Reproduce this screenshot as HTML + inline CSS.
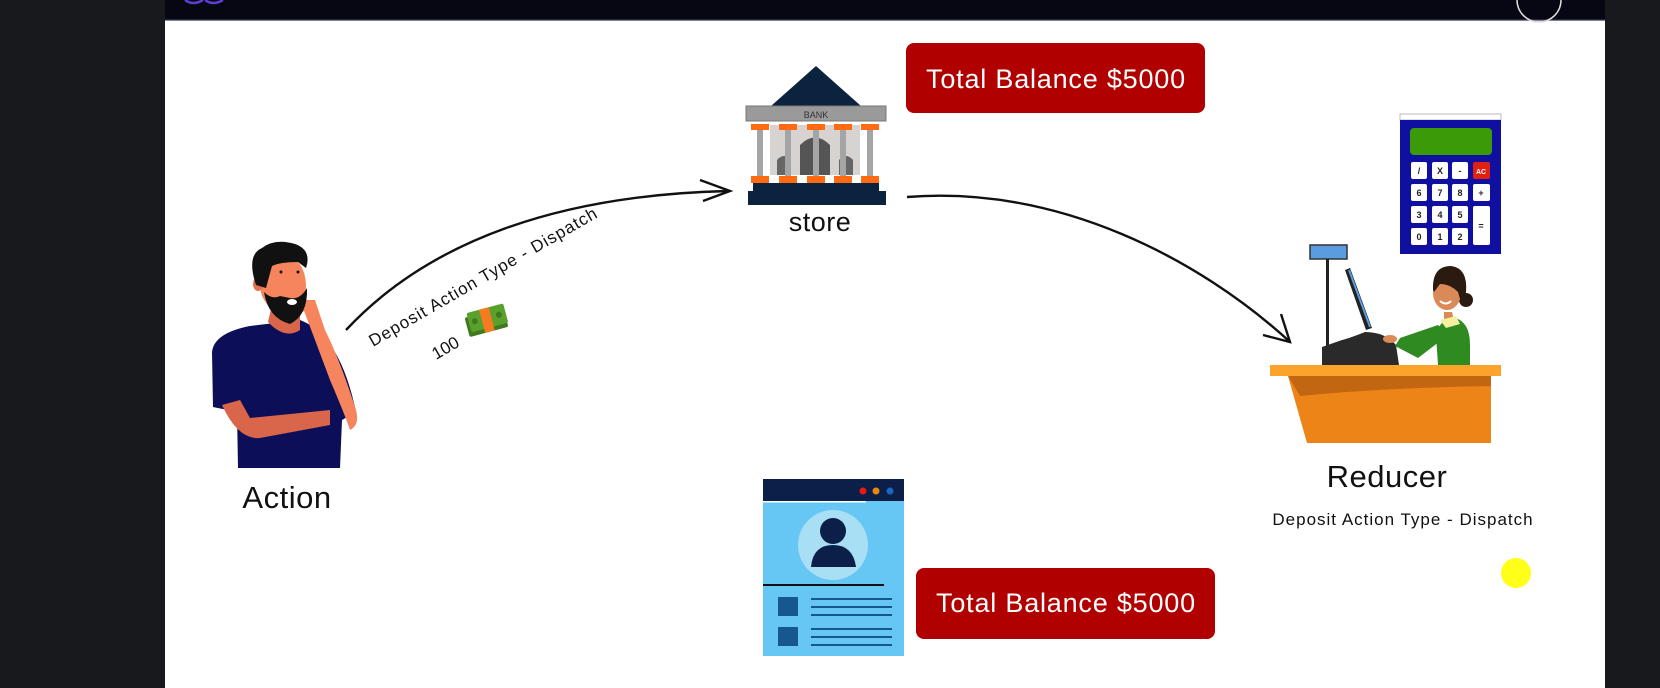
<!DOCTYPE html>
<html><head><meta charset="utf-8"><style>
html,body{margin:0;padding:0;width:1660px;height:688px;overflow:hidden;background:#18191d}
svg{display:block}
text{font-family:"Liberation Sans",sans-serif}
</style></head><body>
<svg width="1660" height="688" viewBox="0 0 1660 688" xmlns="http://www.w3.org/2000/svg">
<rect x="0" y="0" width="1660" height="688" fill="#18191d"/>
<rect x="165" y="0" width="1440" height="688" fill="#ffffff"/>
<rect x="165" y="0" width="1440" height="20" fill="#060712"/>
<rect x="165" y="19.5" width="1440" height="1.2" fill="#4a4766"/>
<path d="M185 0 q8 6 18 0 M205 0 q8 6 18 0" stroke="#5b3fd0" stroke-width="2.5" fill="none"/>
<path d="M1517 0 a22 22 0 0 0 44 0" stroke="#ddd" stroke-width="1.5" fill="none"/>

<!-- arrows -->
<path d="M346 330 C430 240 560 195 728 191" stroke="#111" stroke-width="2.4" fill="none"/>
<path d="M700 180 L730 191 L703 201" stroke="#111" stroke-width="2.4" fill="none"/>
<path d="M907 197 C1060 185 1200 260 1289 341" stroke="#111" stroke-width="2.4" fill="none"/>
<path d="M1263 335 L1290 342 L1281 314" stroke="#111" stroke-width="2.4" fill="none"/>

<!-- rotated label -->
<text transform="translate(373,347) rotate(-30)" font-size="17" fill="#111" letter-spacing="1">Deposit Action Type - Dispatch</text>
<text transform="translate(436,360) rotate(-30)" font-size="17" fill="#111">100</text>
<g transform="translate(463,312) rotate(-15)">
<rect x="0" y="6" width="40" height="20" rx="2" fill="#3f7a1f"/>
<rect x="3" y="2" width="38" height="20" rx="2" fill="#5aa02c"/>
<rect x="16" y="2" width="10" height="24" fill="#f47b20"/>
<circle cx="9" cy="12" r="3" fill="#3f7a1f"/><circle cx="34" cy="12" r="3" fill="#3f7a1f"/>
</g>

<!-- man -->
<g>
<path d="M238 468 L237 412 L213 407 L212 352 Q214 333 250 326 L300 320 Q340 335 356 412 L342 420 L340 468 Z" fill="#0c0f58"/>
<path d="M222 405 Q238 440 260 438 L330 425 L330 410 L250 418 L240 400 Z" fill="#d9654a"/>
<path d="M300 300 Q315 340 330 380 Q345 415 350 430 Q360 425 356 410 Q340 360 325 330 L315 300 Z" fill="#f6845c"/>
<path d="M268 322 Q285 340 300 330 L300 310 L272 305 Z" fill="#d9654a"/>
<path d="M262 270 Q265 252 285 254 Q305 260 306 285 L305 310 Q290 325 275 312 Q260 300 260 285 Z" fill="#f6845c"/>
<ellipse cx="258" cy="284" rx="5" ry="7" fill="#e5704e"/>
<path d="M264 292 Q268 318 290 324 Q308 315 307 288 Q300 300 290 298 L280 296 Q272 300 264 292 Z" fill="#111"/>
<path d="M256 285 Q246 255 262 248 Q275 238 295 244 Q312 250 306 268 L298 262 Q280 262 272 266 L266 288 Z" fill="#111"/>
<ellipse cx="292" cy="302" rx="5" ry="3" fill="#fff"/>
<circle cx="281" cy="272" r="1.5" fill="#111"/><circle cx="298" cy="272" r="1.5" fill="#111"/>
</g>
<text x="287" y="508" font-size="31" fill="#111" text-anchor="middle" letter-spacing="0.5">Action</text>

<!-- bank -->
<g>
<polygon points="816,66 771,106 861,106" fill="#0c2340"/>
<rect x="746" y="106" width="140" height="15" fill="#9a9a9a" stroke="#777" stroke-width="1"/>
<text x="816" y="118" font-size="9" text-anchor="middle" fill="#333">BANK</text>
<rect x="770" y="125" width="90" height="50" fill="#d6d3d0"/>
<path d="M800 175 L800 145 Q815 130 830 145 L830 175 Z" fill="#555"/>
<path d="M777 175 L777 160 Q784 152 791 160 L791 175 Z M839 175 L839 160 Q846 152 853 160 L853 175 Z" fill="#666"/>
<g fill="#ff6a13">
<rect x="751" y="124" width="18" height="6"/><rect x="779" y="124" width="18" height="6"/><rect x="807" y="124" width="18" height="6"/><rect x="834" y="124" width="18" height="6"/><rect x="861" y="124" width="18" height="6"/>
<rect x="751" y="176" width="18" height="7"/><rect x="779" y="176" width="18" height="7"/><rect x="807" y="176" width="18" height="7"/><rect x="834" y="176" width="18" height="7"/><rect x="861" y="176" width="18" height="7"/>
</g>
<g fill="#a5a5a5"><rect x="757" y="130" width="6" height="46"/><rect x="785" y="130" width="6" height="46"/><rect x="813" y="130" width="6" height="46"/><rect x="840" y="130" width="6" height="46"/><rect x="867" y="130" width="6" height="46"/></g>
<rect x="753" y="183" width="126" height="8" fill="#0c2340"/>
<rect x="748" y="191" width="138" height="14" fill="#0c2340"/>
</g>
<text x="820" y="231" font-size="27" fill="#111" text-anchor="middle" letter-spacing="0.5" font-weight="500">store</text>

<!-- balance boxes -->
<rect x="906" y="43" width="299" height="70" rx="8" fill="#b00000"/>
<text x="1056" y="88" font-size="27" fill="#fff" text-anchor="middle" letter-spacing="0.8">Total Balance $5000</text>
<rect x="916" y="568" width="299" height="71" rx="8" fill="#b00000"/>
<text x="1066" y="612" font-size="27" fill="#fff" text-anchor="middle" letter-spacing="0.8">Total Balance $5000</text>

<!-- calculator -->
<g>
<rect x="1400" y="114" width="101" height="6" fill="#fff" stroke="#bbb"/>
<rect x="1400" y="120" width="101" height="134" fill="#1010a0"/>
<rect x="1410" y="128" width="82" height="27" rx="4" fill="#3a9a08"/>
<g fill="#fff">
<rect x="1411" y="162" width="16" height="17" rx="2"/><rect x="1432" y="162" width="16" height="17" rx="2"/><rect x="1452" y="162" width="16" height="17" rx="2"/><rect x="1473" y="162" width="17" height="17" rx="2" fill="#e02010"/>
<rect x="1411" y="184" width="16" height="17" rx="2"/><rect x="1432" y="184" width="16" height="17" rx="2"/><rect x="1452" y="184" width="16" height="17" rx="2"/><rect x="1473" y="184" width="17" height="17" rx="2"/>
<rect x="1411" y="206" width="16" height="17" rx="2"/><rect x="1432" y="206" width="16" height="17" rx="2"/><rect x="1452" y="206" width="16" height="17" rx="2"/><rect x="1473" y="206" width="17" height="39" rx="2"/>
<rect x="1411" y="228" width="16" height="17" rx="2"/><rect x="1432" y="228" width="16" height="17" rx="2"/><rect x="1452" y="228" width="16" height="17" rx="2"/>
</g>
<g fill="#222" font-size="9" text-anchor="middle" font-weight="bold">
<text x="1419" y="174">/</text><text x="1440" y="174">X</text><text x="1460" y="174">-</text><text x="1481" y="174" fill="#fff" font-size="7">AC</text>
<text x="1419" y="196">6</text><text x="1440" y="196">7</text><text x="1460" y="196">8</text><text x="1481" y="196">+</text>
<text x="1419" y="218">3</text><text x="1440" y="218">4</text><text x="1460" y="218">5</text><text x="1481" y="229">=</text>
<text x="1419" y="240">0</text><text x="1440" y="240">1</text><text x="1460" y="240">2</text>
</g>
</g>

<!-- cashier -->
<g>
<rect x="1310" y="245" width="37" height="14" fill="#5b9be0" stroke="#333" stroke-width="1.5"/>
<rect x="1326" y="259" width="3" height="90" fill="#222"/>
<path d="M1345 270 L1350 268 L1372 328 L1366 330 Z" fill="#222"/>
<path d="M1349 270 L1370 327" stroke="#5b9be0" stroke-width="2"/>
<path d="M1322 347 L1322 365 L1399 365 L1396 345 Q1385 332 1365 332 Q1350 338 1342 340 Z" fill="#2a2a2a"/>
<!-- body -->
<path d="M1438 365 L1436 335 Q1440 318 1455 318 Q1470 322 1470 345 L1470 365 Z" fill="#2f8a22"/>
<path d="M1395 346 L1400 338 L1438 325 L1448 335 L1418 358 Z" fill="#2f8a22"/>
<ellipse cx="1390" cy="339" rx="7" ry="4" fill="#d98a56"/>
<path d="M1444 312 L1452 312 L1454 320 L1444 322 Z" fill="#d98a56"/>
<path d="M1440 320 L1456 316 L1460 324 L1446 328 Z" fill="#f5f0a0"/>
<!-- head -->
<circle cx="1466" cy="300" r="7" fill="#2b1a10"/>
<ellipse cx="1447" cy="293" rx="14" ry="17" fill="#d98a56"/>
<path d="M1433 290 Q1432 266 1451 266 Q1468 268 1466 292 L1462 306 L1458 292 Q1450 284 1440 284 L1434 292 Z" fill="#2b1a10"/>
<path d="M1440 301 Q1446 306 1451 301" stroke="#fff" stroke-width="2" fill="none"/>
<rect x="1270" y="365" width="231" height="11" fill="#fba32b"/>
<path d="M1288 376 L1491 376 L1491 443 L1307 443 Z" fill="#ec8418"/>
<path d="M1288 376 L1491 376 L1491 386 Q1380 388 1300 396 Z" fill="#c36612"/>
</g>
<text x="1387" y="487" font-size="31" fill="#111" text-anchor="middle" letter-spacing="0.5">Reducer</text>
<text x="1403" y="525" font-size="17" fill="#111" text-anchor="middle" letter-spacing="1">Deposit Action Type - Dispatch</text>
<circle cx="1516" cy="573" r="15" fill="#ffff1a"/>

<!-- profile card -->
<g>
<rect x="763" y="479" width="141" height="177" fill="#66c6f4"/>
<rect x="763" y="479" width="141" height="22" fill="#0b1f48"/>
<rect x="763" y="501" width="103" height="1.5" fill="#fff"/>
<circle cx="863" cy="491" r="3.5" fill="#e81818"/><circle cx="876" cy="491" r="3.5" fill="#e8870c"/><circle cx="890" cy="491" r="3.5" fill="#1a66c0"/>
<circle cx="833" cy="545" r="35" fill="#a8dff5"/>
<circle cx="833" cy="531" r="13" fill="#0b1f48"/>
<path d="M811 567 Q813 545 833 545 Q853 545 856 567 Z" fill="#0b1f48"/>
<rect x="763" y="584" width="121" height="2" fill="#111"/>
<rect x="778" y="597" width="20" height="19" fill="#17578f"/><rect x="778" y="627" width="20" height="19" fill="#17578f"/>
<g fill="#17578f"><rect x="811" y="598" width="81" height="2"/><rect x="811" y="606" width="81" height="2"/><rect x="811" y="614" width="81" height="2"/><rect x="811" y="628" width="81" height="2"/><rect x="811" y="636" width="81" height="2"/><rect x="811" y="644" width="81" height="2"/></g>
</g>
</svg>
</body></html>
